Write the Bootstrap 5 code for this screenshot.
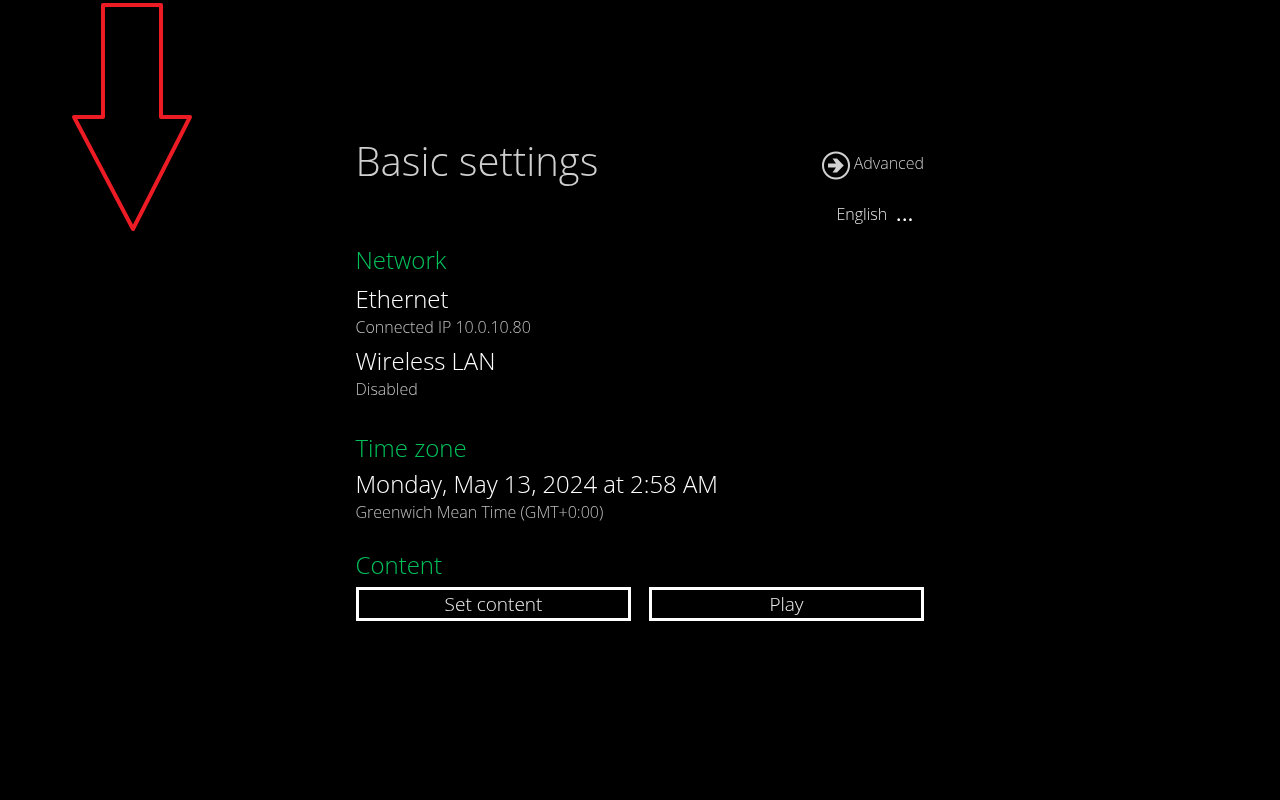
<!DOCTYPE html>
<html lang="en">
<head>
  <meta charset="UTF-8" />
  <meta name="viewport" content="width=device-width, initial-scale=1.0"/>
  <title>Basic settings</title>
  <link href="https://cdn.jsdelivr.net/npm/bootstrap@5.3.0/dist/css/bootstrap.min.css" rel="stylesheet"/>
  <style>
    body {
      background: #000;
      color: #fff;
      font-family: "Open Sans", "Liberation Sans", sans-serif;
      font-weight: 300;
      min-height: 100vh;
    }
    .annot-arrow { position: absolute; left: 70px; top: 2px; }
    .settings-wrap { width: 568px; margin-left: 356px; padding-top: 132px; will-change: transform; }
    .page-title { font-size: 40px; line-height: 58px; font-weight: 300; color: #cfcfcf; margin: 0 0 0 -.5px; }
    .adv-link { font-size: 16px; line-height: 22px; color: #c8c8c8; margin-top: 19px; }
    .adv-label { margin-top: 1px; }
    .lang-row { font-size: 16px; line-height: 22px; color: #e6e6e6; margin-top: 13px; padding-right: 10px; gap: 9px; }
    .lang-dots { color: #fff; font-weight: 600; font-size: 18px; line-height: 22px; letter-spacing: 1px; }
    .sect-head { font-size: 24px; line-height: 32px; font-weight: 300; color: #00c05a; margin: 0 0 0 -.5px; }
    .item-name { font-size: 23.9px; line-height: 34px; font-weight: 300; color: #fff; margin: 0 0 0 -.5px; }
    .item-sub { font-size: 16px; line-height: 22px; color: #c0c0c0; margin: 0 0 0 -.5px; }
    .group-net { margin-top: 19px; }
    .group-net .first-item { margin-top: 6px; }
    .group-net .next-item { margin-top: 6px; }
    .group-time { margin-top: 32px; }
    .group-time .item-name { margin-top: 3px; }
    .group-content { margin-top: 26px; }
    .btn-pair { margin-top: 6px; }
    .box-btn {
      background: #000;
      border: 3px solid #fff;
      border-radius: 0;
      color: #f0f0f0;
      font-size: 19px;
      font-weight: 300;
      line-height: 28px;
      padding: 0;
      height: 34px;
      width: 275px;
    }
  </style>
</head>
<body>
  <!-- red annotation arrow -->
  <svg class="annot-arrow" width="124" height="232" viewBox="70 2 124 232">
    <path d="M103 5H161V117H190L133 229L74 117H103Z" fill="none" stroke="#ed1c24" stroke-width="4" stroke-linejoin="round"/>
  </svg>

  <div class="settings-wrap">
    <div class="d-flex justify-content-between align-items-start">
      <h1 class="page-title">Basic settings</h1>
      <div class="adv-link d-flex align-items-start gap-1">
        <svg width="28" height="29" viewBox="0 0 28 29" class="flex-shrink-0">
          <circle cx="14" cy="14.500" r="13" fill="none" stroke="#d0d0d0" stroke-width="2"/>
          <path d="M6 12.500H14L10.500 7.500H15L21.800 14.500L15 21.500H10.500L14 16.500H6Z" fill="#d0d0d0"/>
        </svg>
        <span class="adv-label">Advanced</span>
      </div>
    </div>
    <div class="lang-row d-flex justify-content-end">
      <span>English</span>
      <span class="lang-dots">...</span>
    </div>

    <section class="group-net">
      <h2 class="sect-head">Network</h2>
      <p class="item-name first-item">Ethernet</p>
      <p class="item-sub">Connected IP 10.0.10.80</p>
      <p class="item-name next-item">Wireless LAN</p>
      <p class="item-sub">Disabled</p>
    </section>

    <section class="group-time">
      <h2 class="sect-head">Time zone</h2>
      <p class="item-name">Monday, May 13, 2024 at 2:58 AM</p>
      <p class="item-sub">Greenwich Mean Time (GMT+0:00)</p>
    </section>

    <section class="group-content">
      <h2 class="sect-head">Content</h2>
      <div class="btn-pair d-flex justify-content-between">
        <button type="button" class="btn box-btn">Set content</button>
        <button type="button" class="btn box-btn">Play</button>
      </div>
    </section>
  </div>

  <script src="https://cdn.jsdelivr.net/npm/bootstrap@5.3.0/dist/js/bootstrap.bundle.min.js"></script>
</body>
</html>
